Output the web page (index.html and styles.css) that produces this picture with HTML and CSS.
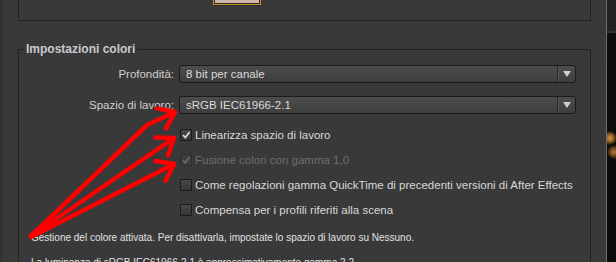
FILE: index.html
```html
<!DOCTYPE html>
<html lang="it">
<head>
    <meta charset="UTF-8">
    <title>Impostazioni progetto</title>
    <link rel="stylesheet" href="styles.css">
</head>
<body>
    <div class="window">
        <div class="dialog">
            <div class="top-panel"><div class="swatch"></div></div>

            <fieldset class="group">
                <legend>Impostazioni colori</legend>

                <div class="fields">
                    <label class="field-label">Profondità:</label>
                    <div class="select">
                        <span class="select-value">8 bit per canale</span>
                        <span class="select-arrow"><span class="tri"></span></span>
                    </div>

                    <label class="field-label">Spazio di lavoro:</label>
                    <div class="select">
                        <span class="select-value">sRGB IEC61966-2.1</span>
                        <span class="select-arrow"><span class="tri"></span></span>
                    </div>
                </div>

                <ul class="checks">
                    <li>
                        <span class="box"><svg viewBox="0 0 10 10"><path d="M2 5 L4.3 7.6 L8.6 2"/></svg></span>
                        Linearizza spazio di lavoro
                    </li>
                    <li class="disabled">
                        <span class="box"><svg viewBox="0 0 10 10"><path d="M2 5 L4.3 7.6 L8.6 2"/></svg></span>
                        Fusione colori con gamma 1,0
                    </li>
                    <li>
                        <span class="box"></span>
                        Come regolazioni gamma QuickTime di precedenti versioni di After Effects
                    </li>
                    <li>
                        <span class="box"></span>
                        Compensa per i profili riferiti alla scena
                    </li>
                </ul>

                <p class="note">Gestione del colore attivata. Per disattivarla, impostate lo spazio di lavoro su Nessuno.</p>
                <p class="note">La luminanza di sRGB IEC61966-2.1 è approssimativamente gamma 2,2.</p>
            </fieldset>
        </div>
        <div class="side"></div>
    </div>

    <!-- red annotation arrows drawn over the dialog -->
    <svg class="arrows" width="616" height="262" viewBox="0 0 616 262">
        <defs>
            <marker id="head" markerUnits="userSpaceOnUse" markerWidth="26" markerHeight="26"
                    refX="20" refY="12" orient="auto" overflow="visible">
                <path d="M5 1 L20 12 L5 23"/>
            </marker>
        </defs>
        <path class="arrow" d="M31 236 L147 125 L175 112" marker-end="url(#head)"/>
        <path class="arrow" d="M31 236 L174 138" marker-end="url(#head)"/>
        <path class="arrow" d="M31 237 L174 164" marker-end="url(#head)"/>
    </svg>
</body>
</html>
```

FILE: styles.css
```css
* {
    box-sizing: border-box;
}

html, body {
    margin: 0;
}

body {
    position: relative;
    width: 616px;
    height: 262px;
    overflow: hidden;
    background-color: #393939;
    font-family: "Liberation Sans", Arial, sans-serif;
    font-size: 11.5px;
    color: #d2d2d2;
}

.window {
    display: flex;
    height: 262px;
}

.dialog {
    flex: none;
    width: 606px;
    box-shadow: inset 2px 0 0 #313131;
}

/* strip of the composition viewer showing at the right */
.side {
    flex: 1;
    border-left: 1px solid #6c6c6c;
    background:
        radial-gradient(circle at 3px 138px, #d49a45 0, #8a5a22 4px, transparent 7px),
        radial-gradient(circle at 7px 152px, #b57a35 0, #6a4418 4px, transparent 7px),
        linear-gradient(to bottom, #222 0, #222 31px, #333 31px, #333 33px, #0e0e0e 33px, #0b0b0b 100%);
}

.top-panel {
    margin-left: 18px;
    width: 573px;
    height: 21px;
    border: 1px solid #222;
    border-top: none;
}

.swatch {
    margin-left: 194px;
    width: 48px;
    height: 5px;
    border: 1px solid #c0912e;
    border-top: none;
    background-color: #cdb7ab;
    box-shadow: inset 0 -1px 0 #3b2c1c, inset 1px 0 0 #3b2c1c, inset -1px 0 0 #3b2c1c, 0 1px 0 #2a2a2a;
}

.group {
    margin: 21px 0 0 18px;
    width: 573px;
    height: 260px;
    min-width: 0;
    padding: 0 14px 0 0;
    border: 1px solid #222;
}

.group legend {
    margin-left: 5px;
    padding: 0 2px;
    font-size: 12px;
    font-weight: bold;
    color: #c8cbcf;
}

.fields {
    display: grid;
    grid-template-columns: 155px 1fr;
    column-gap: 5px;
    row-gap: 13px;
    padding-top: 9px;
}

.field-label {
    align-self: center;
    text-align: right;
    color: #cfcfcf;
}

.select {
    display: flex;
    height: 18px;
    border: 1px solid #1b1b1b;
    border-radius: 3px;
    background: linear-gradient(to bottom, #4c4c4c, #3e3e3e);
    color: #dadada;
}

.select-value {
    flex: 1;
    padding-left: 6px;
    line-height: 16px;
}

.select-arrow {
    display: flex;
    align-items: center;
    justify-content: center;
    width: 18px;
    border-left: 1px solid #2a2a2a;
    box-shadow: inset 1px 0 0 #555;
}

.tri {
    width: 0;
    height: 0;
    border-left: 4px solid transparent;
    border-right: 4px solid transparent;
    border-top: 6px solid #cfcfcf;
}

.checks {
    list-style: none;
    margin: 8px 0 0 161px;
    padding: 0;
}

.checks li {
    display: flex;
    align-items: center;
    gap: 3px;
    height: 25px;
    color: #d8d8d8;
}

.checks li.disabled {
    color: #6e6e6e;
}

.box {
    flex: none;
    width: 12px;
    height: 12px;
    border: 1px solid #1a1a1a;
    border-radius: 1px;
    background: linear-gradient(to bottom, #474747, #363636);
}

.box svg {
    display: block;
    width: 10px;
    height: 10px;
    fill: none;
    stroke: #d6d6d6;
    stroke-width: 1.7;
}

.disabled .box {
    border-color: #2b2b2b;
    background: #3c3c3c;
}

.disabled .box svg {
    stroke: #6a6a6a;
}

.note {
    margin: 10px 0 0 12px;
    font-size: 10px;
    line-height: 12px;
    color: #e2e2e2;
}

.note + .note {
    margin-top: 13px;
}

.arrows {
    position: absolute;
    top: 0;
    left: 0;
    pointer-events: none;
}

.arrow,
.arrows marker path {
    fill: none;
    stroke: #ff0000;
    stroke-width: 4.5;
    stroke-linecap: round;
    stroke-linejoin: round;
}
```
